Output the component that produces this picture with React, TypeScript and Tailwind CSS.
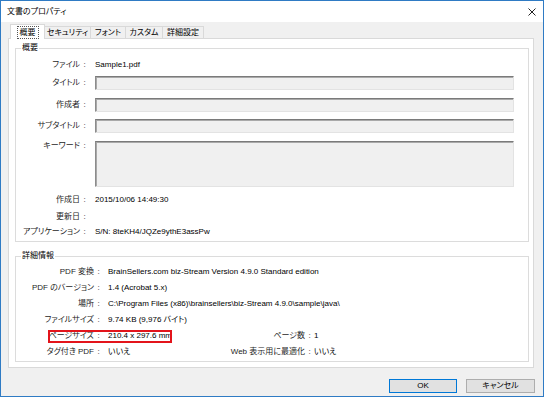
import type { ReactNode } from "react"

const FONT = "font-['Liberation_Sans','Noto_Sans_CJK_JP',sans-serif] [font-feature-settings:'palt']"

const BOX =
  "h-[14px] w-[419px] bg-[#f0f0f0] border border-t-[#7a7a7a] border-l-[#8c8c8c] border-r-[#e3e3e3] border-b-[#e3e3e3] shadow-[inset_1px_1px_0_#a9a9a9]"

function Colon() {
  return <span className="w-[9px] shrink-0 text-center text-[#1e1e1e]">:</span>
}

function Row1({ label, children, className = "" }: { label: string; children?: ReactNode; className?: string }) {
  return (
    <div className={"flex items-center " + className}>
      <div className="w-[64px] shrink-0 text-right text-[#1e1e1e] whitespace-nowrap">{label}</div>
      <Colon />
      <div className="ml-[6px] text-black whitespace-nowrap">{children}</div>
    </div>
  )
}

function Row2({ label, children }: { label: string; children?: ReactNode }) {
  return (
    <div className="flex items-center h-[16px]">
      <div className="w-[78px] shrink-0 text-right text-[#1e1e1e] whitespace-nowrap">{label}</div>
      <Colon />
      <div className="ml-[5px] text-black whitespace-nowrap">{children}</div>
    </div>
  )
}

const TABS = [
  { name: "セキュリティ", w: "w-[47px]" },
  { name: "フォント", w: "w-[36px]" },
  { name: "カスタム", w: "w-[38px]" },
  { name: "詳細設定", w: "w-[42px]" },
]

export default function App() {
  return (
    <div className={"w-[544px] h-[397px] border border-[#2f7bc4] bg-[#f0f0f0] flex flex-col overflow-hidden text-[8px] leading-[14px] " + FONT}>
      {/* Title bar */}
      <div className="h-[21px] shrink-0 bg-white flex items-center justify-between pl-[6px] pr-[7px]">
        <span className="text-black">文書のプロパティ</span>
        <svg width="8" height="8" viewBox="0 0 8 8" className="text-[#222]">
          <path d="M0.5 0.5L7.5 7.5M7.5 0.5L0.5 7.5" stroke="currentColor" strokeWidth="1" fill="none" />
        </svg>
      </div>

      {/* Tabs */}
      <div className="flex items-end ml-[9px] pt-[2px] box-content h-[14px]">
        <div className="relative z-10 -mb-px h-[15px] w-[35px] bg-white border-x border-t border-[#d9d9d9] flex items-center justify-center">
          <span className="px-[2px] leading-[11px] border border-dotted border-[#555]">概要</span>
        </div>
        {TABS.map((t) => (
          <div key={t.name} className={"-ml-px h-[12px] flex items-center justify-center bg-[#f0f0f0] border-x border-t border-[#d9d9d9] whitespace-nowrap " + t.w}>
            {t.name}
          </div>
        ))}
      </div>

      {/* Tab panel */}
      <div className="ml-[7px] w-[526px] h-[330px] shrink-0 bg-white border border-[#d9d9d9] pl-[6px] pt-[9px]">
        {/* 概要 group */}
        <div className="relative w-[514px] h-[194px] border border-[#dcdcdc] pt-[9px] flex flex-col">
          <span className="absolute left-[5px] -top-[7px] bg-white px-[1px] leading-[12px]">概要</span>
          <Row1 label="ファイル" className="h-[14px]">Sample1.pdf</Row1>
          <Row1 label="タイトル" className="mt-[4px]"><div className={BOX} /></Row1>
          <Row1 label="作成者" className="mt-[8px]"><div className={BOX} /></Row1>
          <Row1 label="サブタイトル" className="mt-[7px]"><div className={BOX} /></Row1>
          <div className="flex items-start mt-[8px] leading-[10px]">
            <div className="w-[64px] shrink-0 text-right text-[#1e1e1e]">キーワード</div>
            <Colon />
            <div className={"ml-[6px] " + BOX + " h-[46px]"} />
          </div>
          <Row1 label="作成日" className="h-[14px] mt-[6px]">2015/10/06 14:49:30</Row1>
          <Row1 label="更新日" className="h-[14px] mt-[3px]" />
          <Row1 label="アプリケーション" className="h-[14px] mt-[1px]">S/N: 8teKH4/JQZe9ythE3assPw</Row1>
        </div>

        {/* 詳細情報 group */}
        <div className="relative mt-[14px] w-[514px] h-[106px] border border-[#dcdcdc] pt-[7px] flex flex-col">
          <span className="absolute left-[5px] -top-[7px] bg-white px-[1px] leading-[12px]">詳細情報</span>
          <Row2 label="PDF 変換">BrainSellers.com biz-Stream Version 4.9.0 Standard edition</Row2>
          <Row2 label="PDF のバージョン">1.4 (Acrobat 5.x)</Row2>
          <Row2 label="場所">C:\Program Files (x86)\brainsellers\biz-Stream 4.9.0\sample\java\</Row2>
          <Row2 label="ファイルサイズ">9.74 KB (9,976 バイト)</Row2>
          <div className="relative flex items-center h-[16px]">
            <div className="w-[78px] shrink-0 text-right text-[#1e1e1e]">ページサイズ</div>
            <Colon />
            <div className="ml-[5px] w-[92px] shrink-0 text-black">210.4 x 297.6 mm</div>
            <div className="w-[105px] shrink-0 text-right text-[#1e1e1e]">ページ数</div>
            <Colon />
            <div className="text-black">1</div>
            <div className="absolute left-[32px] top-[2px] w-[124px] h-[13px] border-2 border-[#e3141b] pointer-events-none" />
          </div>
          <div className="flex items-center h-[16px]">
            <div className="w-[78px] shrink-0 text-right text-[#1e1e1e]">タグ付き PDF</div>
            <Colon />
            <div className="ml-[5px] w-[92px] shrink-0 text-black">いいえ</div>
            <div className="w-[105px] shrink-0 text-right text-[#1e1e1e] whitespace-nowrap">Web 表示用に最適化</div>
            <Colon />
            <div className="text-black">いいえ</div>
          </div>
        </div>
      </div>

      {/* Buttons */}
      <div className="flex justify-end gap-[9px] pr-[8px] mt-[11px]">
        <button className="w-[68px] h-[14px] bg-[#e1e1e1] border border-[#0078d7] text-black leading-[12px]">OK</button>
        <button className="w-[69px] h-[14px] bg-[#e1e1e1] border border-[#adadad] text-black leading-[12px]">キャンセル</button>
      </div>
    </div>
  )
}
